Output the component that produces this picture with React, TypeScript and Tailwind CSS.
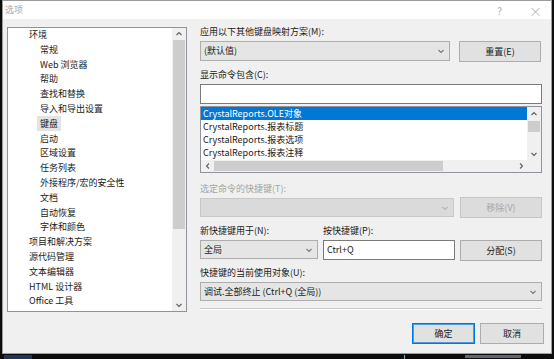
import React from 'react';

type Dir = 'up' | 'down' | 'left' | 'right';

const Chevron = ({ dir, className }: { dir: Dir; className?: string }) => {
  const d = {
    up: 'M1.5 5 L4 2.5 L6.5 5',
    down: 'M1.5 3 L4 5.5 L6.5 3',
    left: 'M5 1.5 L2.5 4 L5 6.5',
    right: 'M3 1.5 L5.5 4 L3 6.5',
  }[dir];
  return (
    <svg width="8" height="8" viewBox="0 0 8 8" className={className}>
      <path d={d} fill="none" stroke="currentColor" strokeWidth="1.1" />
    </svg>
  );
};

const treeItems = [
  { label: '环境', level: 0 },
  { label: '常规', level: 1 },
  { label: 'Web 浏览器', level: 1 },
  { label: '帮助', level: 1 },
  { label: '查找和替换', level: 1 },
  { label: '导入和导出设置', level: 1 },
  { label: '键盘', level: 1, selected: true },
  { label: '启动', level: 1 },
  { label: '区域设置', level: 1 },
  { label: '任务列表', level: 1 },
  { label: '外接程序/宏的安全性', level: 1 },
  { label: '文档', level: 1 },
  { label: '自动恢复', level: 1 },
  { label: '字体和颜色', level: 1 },
  { label: '项目和解决方案', level: 0 },
  { label: '源代码管理', level: 0 },
  { label: '文本编辑器', level: 0 },
  { label: 'HTML 设计器', level: 0 },
  { label: 'Office 工具', level: 0 },
];

const commands = [
  'CrystalReports.OLE对象',
  'CrystalReports.报表标题',
  'CrystalReports.报表选项',
  'CrystalReports.报表注释',
];

const Label = ({ children, disabled }: { children: React.ReactNode; disabled?: boolean }) => (
  <div className={`h-[16px] leading-[16px] ${disabled ? 'text-[#a3a3a3]' : 'text-[#1a1a1a]'}`}>{children}</div>
);

const Combo = ({ value, className, disabled }: { value?: string; className?: string; disabled?: boolean }) => (
  <div
    className={`flex items-center justify-between border pl-[3px] pr-[4px] ${
      disabled ? 'bg-[#dadada] border-[#c8c8c8]' : 'bg-[#e5e5e5] border-[#adadad]'
    } ${className ?? ''}`}
  >
    <span className="truncate">{value}</span>
    <Chevron dir="down" className={disabled ? 'text-[#b4b4b4]' : 'text-[#777]'} />
  </div>
);

const Button = ({ children, className, disabled }: { children: React.ReactNode; className?: string; disabled?: boolean }) => (
  <div
    className={`flex items-center justify-center border ${
      disabled ? 'bg-[#dcdcdc] border-[#c6c6c6] text-[#a6a6a6]' : 'bg-[#e1e1e1] border-[#adadad] text-[#1a1a1a]'
    } ${className ?? ''}`}
  >
    {children}
  </div>
);

export default function App() {
  return (
    <div className="w-[554px] h-[359px] bg-[#0d0d0d] pl-[2px] overflow-hidden font-['Noto_Sans_CJK_SC','Noto_Sans',sans-serif] text-[9px] text-[#1a1a1a]">
      <div className="w-[550px] h-[354px] border border-[#9c9c9c] bg-[#f0f0f0] flex flex-col">
        {/* title bar */}
        <div className="h-[18px] bg-white flex items-center pl-[2px] pr-[9px] text-[#a8a8a8]">
          <span className="text-[9px]">选项</span>
          <span className="ml-auto text-[10px]">?</span>
          <span className="ml-[27px] text-[13px] leading-none font-light">×</span>
        </div>

        {/* body */}
        <div className="flex pl-[4px] pt-[5px]">
          {/* tree */}
          <div className="mt-[3px] w-[180px] h-[285px] border border-[#8f949c] bg-white flex">
            <div className="flex-1">
              {treeItems.map((item) => (
                <div
                  key={item.label}
                  className={`h-[14.8px] leading-[14.8px] whitespace-nowrap ${item.level === 0 ? 'pl-[18px]' : 'pl-[29px]'}`}
                >
                  <span className={`px-[3px] py-[1px] ${item.selected ? 'bg-[#e3e3e3]' : ''}`}>{item.label}</span>
                </div>
              ))}
            </div>
            <div className="w-[14px] bg-[#f0f0f0] flex flex-col">
              <div className="h-[12px] flex items-center justify-center text-[#606060]">
                <Chevron dir="up" />
              </div>
              <div className="mx-[1px] h-[189px] bg-[#cdcdcd]" />
              <div className="flex-1" />
              <div className="h-[12px] flex items-center justify-center text-[#606060]">
                <Chevron dir="down" />
              </div>
            </div>
          </div>

          {/* right column */}
          <div className="ml-[13px] w-[342px] flex flex-col">
            <Label>应用以下其他键盘映射方案(M):</Label>
            <div className="mt-[1px] flex items-start gap-[9px]">
              <Combo value="(默认值)" className="w-[250px] h-[20px]" />
              <Button className="w-[82px] h-[21px]">重置(E)</Button>
            </div>

            <div className="mt-[5px]">
              <Label>显示命令包含(C):</Label>
            </div>
            <div className="mt-[1px] h-[20px] border border-[#7a7a7a] bg-white" />

            {/* command list */}
            <div className="mt-[2px] h-[67px] border border-[#8f949c] bg-white flex flex-col">
              <div className="h-[53px] flex">
                <div className="flex-1">
                  {commands.map((c, i) => (
                    <div
                      key={c}
                      className={`h-[13px] leading-[13px] pl-[2px] whitespace-nowrap ${
                        i === 0 ? 'bg-[#0078d7] text-white' : ''
                      }`}
                    >
                      {c}
                    </div>
                  ))}
                </div>
                <div className="w-[14px] bg-[#f0f0f0] flex flex-col">
                  <div className="h-[13px] flex items-center justify-center text-[#606060]">
                    <Chevron dir="up" />
                  </div>
                  <div className="mt-[1px] mx-[1px] h-[11px] bg-[#cdcdcd]" />
                  <div className="flex-1" />
                  <div className="h-[13px] flex items-center justify-center text-[#606060]">
                    <Chevron dir="down" />
                  </div>
                </div>
              </div>
              <div className="h-[12px] flex bg-[#f0f0f0]">
                <div className="w-[13px] flex items-center justify-center text-[#606060]">
                  <Chevron dir="left" />
                </div>
                <div className="my-[1px] w-[229px] bg-[#cdcdcd]" />
                <div className="flex-1" />
                <div className="w-[13px] flex items-center justify-center text-[#606060]">
                  <Chevron dir="right" />
                </div>
                <div className="w-[14px]" />
              </div>
            </div>

            <div className="mt-[8px]">
              <Label disabled>选定命令的快捷键(T):</Label>
            </div>
            <div className="flex items-start gap-[6px]">
              <Combo disabled className="mt-[1px] w-[254px] h-[19px]" />
              <Button disabled className="w-[82px] h-[21px]">移除(V)</Button>
            </div>

            <div className="mt-[5px] grid grid-cols-[118px_132px_82px] gap-x-[5px]">
              <Label>新快捷键用于(N):</Label>
              <Label>按快捷键(P):</Label>
              <div />
              <Combo value="全局" className="mt-[1px] h-[19px]" />
              <div className="mt-[1px] h-[20px] border border-[#7a7a7a] bg-white pl-[3px] leading-[18px]">Ctrl+Q</div>
              <Button className="mt-[1px] h-[21px]">分配(S)</Button>
            </div>

            <div className="mt-[4px]">
              <Label>快捷键的当前使用对象(U):</Label>
            </div>
            <Combo value="调试.全部终止 (Ctrl+Q (全局))" className="mt-[1px] h-[19px]" />

            <div className="mt-[7px] h-[1px] bg-[#c8c8c8]" />
            <div className="h-[1px] bg-white" />
          </div>
        </div>

        {/* footer */}
        <div className="mt-[11px] flex justify-end gap-[5px] pr-[7px]">
          <Button className="w-[63px] h-[21px] !border-[#0078d7] shadow-[inset_0_0_0_1px_#4a9be0]">确定</Button>
          <Button className="w-[64px] h-[21px]">取消</Button>
        </div>
      </div>

      {/* desktop behind the dialog (taskbar fragments) */}
      <div className="flex items-start h-[5px] pt-[1px]">
        <div className="ml-[2px] w-[28px] h-[4px] bg-[#1f3550]" />
        <div className="ml-[372px] w-[1px] h-[4px] bg-[#9aa6b6]" />
        <div className="ml-[60px] w-[56px] h-[3px] bg-[#5d6775]" />
      </div>
    </div>
  );
}
